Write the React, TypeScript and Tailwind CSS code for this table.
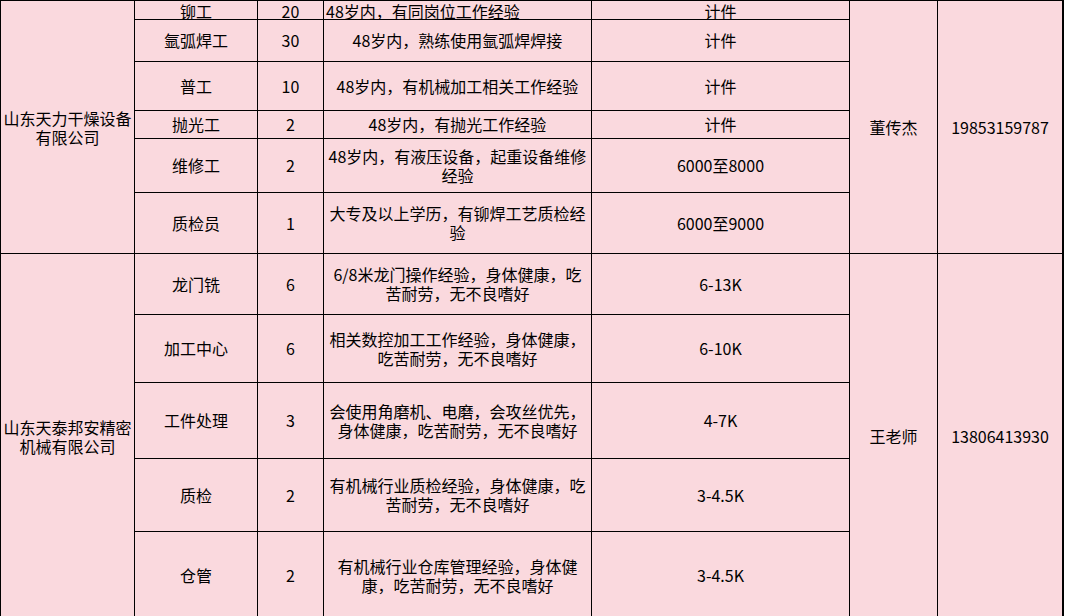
import React from "react";

type Row = { job: string; num: string; req: string; pay: string };

const tianli: Row[] = [
  { job: "铆工", num: "20", req: "48岁内，有同岗位工作经验", pay: "计件" },
  { job: "氩弧焊工", num: "30", req: "48岁内，熟练使用氩弧焊焊接", pay: "计件" },
  { job: "普工", num: "10", req: "48岁内，有机械加工相关工作经验", pay: "计件" },
  { job: "抛光工", num: "2", req: "48岁内，有抛光工作经验", pay: "计件" },
  { job: "维修工", num: "2", req: "48岁内，有液压设备，起重设备维修经验", pay: "6000至8000" },
  { job: "质检员", num: "1", req: "大专及以上学历，有铆焊工艺质检经验", pay: "6000至9000" },
];

const taibang: Row[] = [
  { job: "龙门铣", num: "6", req: "6/8米龙门操作经验，身体健康，吃苦耐劳，无不良嗜好", pay: "6-13K" },
  { job: "加工中心", num: "6", req: "相关数控加工工作经验，身体健康，吃苦耐劳，无不良嗜好", pay: "6-10K" },
  { job: "工件处理", num: "3", req: "会使用角磨机、电磨，会攻丝优先，身体健康，吃苦耐劳，无不良嗜好", pay: "4-7K" },
  { job: "质检", num: "2", req: "有机械行业质检经验，身体健康，吃苦耐劳，无不良嗜好", pay: "3-4.5K" },
  { job: "仓管", num: "2", req: "有机械行业仓库管理经验，身体健康，吃苦耐劳，无不良嗜好", pay: "3-4.5K" },
];

const cell =
  "flex items-center justify-center text-center px-[2px] border-r border-b border-black bg-[#fad9de]";

function Rows({ rows, first }: { rows: Row[]; first?: boolean }) {
  return (
    <>
      {rows.map((r, i) => {
        const top = first && i === 0;
        const c = top ? cell + " items-start pt-[1px] overflow-hidden" : cell;
        return (
          <React.Fragment key={r.job}>
            <div className={c}>{r.job}</div>
            <div className={c}>{r.num}</div>
            <div className={top ? c + " justify-start text-left" : c}>{r.req}</div>
            <div className={c}>{r.pay}</div>
          </React.Fragment>
        );
      })}
    </>
  );
}

export default function App() {
  return (
    <div className="h-[616px] w-full overflow-hidden bg-white">
      <div className="grid w-fit border-l border-t border-black text-[16px] leading-[19px] text-black grid-cols-[134px_123px_66px_268px_258px_88px_126px] grid-rows-[19px_42px_49px_28px_54px_61px_61px_68px_76px_73px_88px] font-['Noto_Sans_CJK_SC','Noto_Sans_CJK_JP',sans-serif]">
        <div className={cell + " row-span-6 pt-[2px]"}>山东天力干燥设备有限公司</div>
        <Rows rows={tianli.slice(0, 1)} first />
        <div className={cell + " row-span-6"}>董传杰</div>
        <div className={cell + " row-span-6 border-r-2"}>19853159787</div>
        <Rows rows={tianli.slice(1)} />

        <div className={cell + " row-span-5"}>山东天泰邦安精密机械有限公司</div>
        <Rows rows={taibang.slice(0, 1)} />
        <div className={cell + " row-span-5"}>王老师</div>
        <div className={cell + " row-span-5 border-r-2"}>13806413930</div>
        <Rows rows={taibang.slice(1)} />
      </div>
    </div>
  );
}
